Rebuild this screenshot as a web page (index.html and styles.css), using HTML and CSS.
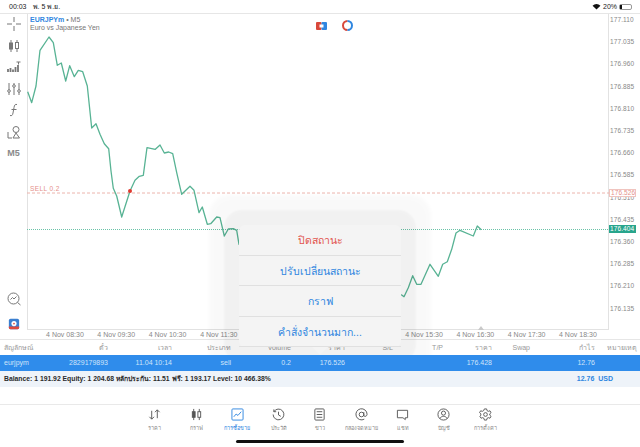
FILE: index.html
```html
<!DOCTYPE html>
<html lang="th">
<head>
  <meta charset="UTF-8">
  <meta name="viewport" content="width=device-width, initial-scale=1.0">
  <title>EURJPYm</title>
  <link rel="stylesheet" href="styles.css">
</head>
<body>
  <div class="status">
    <div><span class="clock">00:03</span><span class="date">พ. 5 พ.ย.</span></div>
    <div class="status-right">
      <svg width="9" height="7" viewBox="0 0 10 8"><path d="M5 7.5 .5 3a6.4 6.4 0 0 1 9 0z" fill="#111"/></svg>
      <span>20%</span>
      <span class="battery"><span class="battery-level"></span></span>
    </div>
  </div>

  <div class="main">
    <div class="tools">
      <svg class="tool" viewBox="0 0 14 14"><path d="M0 7h5M9 7h5M7 0v5M7 9v5"/></svg>
      <svg class="tool" viewBox="0 0 14 14"><path d="M4 1v12M10 1v12"/><rect x="2.5" y="4" width="3" height="6" fill="#777"/><rect x="8.5" y="3.500" width="3" height="6" fill="#fff"/></svg>
      <svg class="tool" viewBox="0 0 14 14"><path d="M1 12V9M3.500 12V8M6 12V9.500M8.500 12V7M11 12V5" stroke-width="1.8"/><path d="M9.500 2h4M11.500 2v2.500"/></svg>
      <svg class="tool" viewBox="0 0 14 14"><path d="M2 1v12M7 1v12M12 1v12"/><circle cx="2" cy="9" r="1.300" fill="#fff"/><circle cx="7" cy="4" r="1.300" fill="#fff"/><circle cx="12" cy="9" r="1.300" fill="#fff"/></svg>
      <svg class="tool" viewBox="0 0 14 14"><path d="M10 1.500C8 1 7.500 2 7 4.500L6 10c-.4 2.400-1.200 3-3 2.500M4.500 6.500h5"/></svg>
      <svg class="tool" viewBox="0 0 14 14"><circle cx="9" cy="4.500" r="3"/><path d="M1 7v6h4M9 8l3.500 5h-6.500z"/></svg>
      <div class="tool-text">M5</div>
      <div class="tools-gap"></div>
      <svg class="tool" viewBox="0 0 14 14"><circle cx="6.500" cy="6.500" r="5.500"/><path d="M3.500 7.500l2-2 1.500 1.500 2.500-2.500M10.500 10.500l3 2.500"/></svg>
      <svg class="tool tool-logo" viewBox="0 0 14 14"><rect x="1" y="1" width="12" height="12" rx="2" fill="#3b7fd0" stroke="none"/><path d="M1 10h12v1.500a1.500 1.500 0 0 1-1.500 1.500h-9A1.500 1.500 0 0 1 1 11.500z" fill="#e0493c" stroke="none"/><circle cx="7" cy="6.500" r="3" fill="#fff" stroke="none"/><circle cx="7" cy="6.500" r="1" fill="#e0493c" stroke="none"/></svg>
    </div>

    <div class="chart">
      <svg class="plot" viewBox="27 13 582 317">
        <line x1="27" y1="192" x2="609" y2="192" class="sell-line"/>
        <line x1="27" y1="228.500" x2="609" y2="228.500" class="price-line"/>
        <polyline class="series" points="27.700,90.700 31.700,101.700 36,85 40,49.300 49,36 53.300,41.700 57.300,64.300 61.300,62 65.700,80 69.700,64.700 74.300,75.700 78.300,69.300 82.700,70.700 87.300,85 91.700,127 96,122.700 100,133.300 104.300,142.700 108.700,147.700 111,170 113.300,187.300 116.700,195 121.700,216 130,190 135,179.300 139.300,175.300 143.300,174.300 147,146.700 155.300,148.300 160,144 164.300,152 168.700,151 172.700,152.700 176.700,171.700 181.700,193.300 190,185.300 194,189.300 199,211.700 202.300,206 207.300,223.300 210.700,222.700 216.700,216 220,216.700 224.300,235 228.300,228 233.300,227.700 236.700,229.300 239,243.300 260,262 320,290 380,285 401.700,294 404,295.700 408.300,286.700 412.700,274.700 416.700,283.300 421,283.300 430,263.300 438.300,275.300 442.700,263.300 447.300,260.700 451.700,248.300 456,232 460,229.300 473.300,235 477.300,225 481.300,228.700"/>
        <circle cx="130" cy="190" r="2" fill="#e0392f"/>
        <path d="M481 325l3 4h-6z" fill="#c9c9c9"/>
      </svg>
      <div class="chart-title"><b>EURJPYm</b> • M5</div>
      <div class="chart-sub">Euro vs Japanese Yen</div>
      <div class="sell-label">SELL 0.2</div>
      <div class="chart-badges">
        <svg width="11" height="8" viewBox="0 0 11 8"><rect width="5.500" height="8" rx="1" fill="#d9483b"/><rect x="5.500" width="5.500" height="8" rx="1" fill="#2f86e0"/><rect x="3.500" y="2.500" width="4" height="3" fill="#fff"/></svg>
        <svg width="11" height="11" viewBox="0 0 11 11" fill="none" stroke-width="2"><path d="M5.500 1a4.500 4.500 0 0 0 0 9" stroke="#d9483b"/><path d="M5.500 1a4.500 4.500 0 0 1 0 9" stroke="#2f86e0"/></svg>
      </div>
    </div>

    <div class="axis-y">
      <span>177.110</span><span>177.035</span><span>176.960</span><span>176.885</span>
      <span>176.810</span><span>176.735</span><span>176.660</span><span>176.585</span>
      <span>176.510</span><span>176.435</span><span>176.360</span><span>176.285</span>
      <span>176.210</span><span>176.135</span>
      <div class="tag tag-sell">176.526</div>
      <div class="tag tag-price">176.404</div>
    </div>
  </div>

  <div class="axis-x">
    <span>4 Nov 08:30</span><span>4 Nov 09:30</span><span>4 Nov 10:30</span><span>4 Nov 11:30</span>
    <div class="axis-gap"></div>
    <span>4 Nov 15:30</span><span>4 Nov 16:30</span><span>4 Nov 17:30</span><span>4 Nov 18:30</span>
  </div>

  <div class="row row-head">
    <span class="first">สัญลักษณ์</span><span>ตั๋ว</span><span>เวลา</span><span>ประเภท</span><span>Volume</span><span>ราคา</span><span>S/L</span><span>T/P</span><span>ราคา</span><span>Swap</span><span>กำไร</span><span>หมายเหตุ</span>
  </div>
  <div class="row row-active">
    <span class="first">eurjpym</span><span>2829179893</span><span>11.04 10:14</span><span>sell</span><span>0.2</span><span>176.526</span><span></span><span></span><span>176.428</span><span></span><span>12.76</span><span></span>
  </div>
  <div class="balance">
    <span>Balance: 1 191.92 Equity: 1 204.68 หลักประกัน: 11.51 ฟรี: 1 193.17 Level: 10 466.38%</span>
    <span class="balance-total">12.76&nbsp; USD</span>
  </div>

  <div class="nav">
    <div class="nav-item">
      <svg viewBox="0 0 14 14"><path d="M4 3v9M1.500 9.500 4 12l2.500-2.500M10 11V2M7.500 4.500 10 2l2.500 2.500"/></svg>
      <span>ราคา</span>
    </div>
    <div class="nav-item">
      <svg viewBox="0 0 14 14"><path d="M4 1v12M10 1v12"/><rect x="2.500" y="4" width="3" height="6" fill="#555"/><rect x="8.500" y="4" width="3" height="6" fill="#fff"/></svg>
      <span>กราฟ</span>
    </div>
    <div class="nav-item nav-active">
      <svg viewBox="0 0 14 14"><rect x="1" y="1" width="12" height="12" rx="1"/><path d="M3 9.500l2.500-3 2 1.500L11 4"/></svg>
      <span>การซื้อขาย</span>
    </div>
    <div class="nav-item">
      <svg viewBox="0 0 14 14"><path d="M2 4a5.800 5.800 0 1 1-.8 3M2 1.500V4h2.500M7 4v3.500l2.500 1.500"/></svg>
      <span>ประวัติ</span>
    </div>
    <div class="nav-item">
      <svg viewBox="0 0 14 14"><rect x="2" y="1" width="10" height="12" rx="1"/><path d="M4 4h6M4 7h6M4 10h6"/></svg>
      <span>ข่าว</span>
    </div>
    <div class="nav-item">
      <svg viewBox="0 0 14 14"><circle cx="7" cy="7" r="2.500"/><path d="M9.500 4.500v3.300c0 2 3.500 1.500 3.500-1A6 6 0 1 0 10 12"/></svg>
      <span>กล่องจดหมาย</span>
    </div>
    <div class="nav-item">
      <svg viewBox="0 0 14 14"><path d="M1.500 2.500h11v8H10v2l-2.500-2h-6z"/></svg>
      <span>แชท</span>
    </div>
    <div class="nav-item">
      <svg viewBox="0 0 14 14"><circle cx="7" cy="7" r="6"/><circle cx="7" cy="5.500" r="2.200"/><path d="M3 11.500c1-2 2.500-2.500 4-2.500s3 .5 4 2.500"/></svg>
      <span>บัญชี</span>
    </div>
    <div class="nav-item">
      <svg viewBox="0 0 14 14"><path d="M5.800 1h2.400l.4 1.800 1.400.8 1.800-.6 1.200 2-1.400 1.300v1.400l1.400 1.300-1.200 2-1.800-.6-1.400.8L8.200 13H5.800l-.4-1.800-1.400-.8-1.800.6-1.200-2L2 7.700V6.300L.6 5l1.200-2 1.800.6 1.400-.8z"/><circle cx="7" cy="7" r="2"/></svg>
      <span>การตั้งค่า</span>
    </div>
  </div>
  <div class="home-bar"></div>

  <div class="popover">
    <div class="popover-item danger">ปิดสถานะ</div>
    <div class="popover-item">ปรับเปลี่ยนสถานะ</div>
    <div class="popover-item">กราฟ</div>
    <div class="popover-item">คำสั่งจำนวนมาก...</div>
    <div class="popover-arrow"></div>
  </div>
</body>
</html>
```

FILE: styles.css
```css
* {
  box-sizing: border-box;
}

body {
  margin: 0;
  width: 640px;
  height: 447px;
  overflow: hidden;
  position: relative;
  background-color: #fff;
  font-family: "Liberation Sans", "Noto Sans", sans-serif;
  color: #777;
}

.status {
  height: 13px;
  display: flex;
  justify-content: space-between;
  align-items: center;
  padding: 0 8px 0 9px;
  font-size: 7px;
  color: #222;
}

.clock {
  margin-right: 6px;
}

.status-right {
  display: flex;
  align-items: center;
  gap: 2px;
}

.battery {
  width: 13px;
  height: 6px;
  border: 1px solid #999;
  border-radius: 2px;
  display: block;
}

.battery-level {
  display: block;
  width: 2px;
  height: 100%;
  background-color: #111;
}

.main {
  height: 317px;
  display: flex;
  border-top: 1px solid #e6e6e6;
}

.tools {
  width: 27px;
  flex: none;
  display: flex;
  flex-direction: column;
  align-items: center;
  padding-top: 3px;
}

.tool {
  width: 14px;
  height: 14px;
  margin-bottom: 7.500px;
  fill: none;
  stroke: #777;
  stroke-width: 1;
}

.tool-text {
  font-size: 9px;
  font-weight: bold;
  line-height: 14px;
  color: #8a8a8a;
}

.tools-gap {
  flex: 1;
}

.tool-logo {
  width: 12px;
  height: 12px;
  margin-top: 5px;
  margin-bottom: 0;
}

.chart {
  flex: 1;
  position: relative;
  border-left: 1px solid #e2e2e2;
  border-right: 1px solid #e2e2e2;
  border-bottom: 1px solid #e2e2e2;
  padding: 1px 0 0 2px;
}

.plot {
  position: absolute;
  left: -1px;
  top: 0;
  width: 582px;
  height: 317px;
}

.series {
  fill: none;
  stroke: #58b394;
  stroke-width: 1.300;
  stroke-linejoin: round;
}

.sell-line {
  stroke: #ecb4ac;
  stroke-width: 1;
  stroke-dasharray: 3 2;
}

.price-line {
  stroke: #6cc3a8;
  stroke-width: 1;
  stroke-dasharray: 1 1;
}

.chart-title {
  position: relative;
  font-size: 7px;
  line-height: 9px;
}

.chart-title b {
  color: #2f86e0;
}

.chart-sub {
  position: relative;
  font-size: 7px;
  line-height: 8px;
  color: #777;
}

.sell-label {
  position: absolute;
  left: 2px;
  top: 171px;
  font-size: 6.500px;
  letter-spacing: .4px;
  color: #e58f8a;
}

.chart-badges {
  position: absolute;
  left: 288px;
  top: 6px;
  display: flex;
  align-items: center;
  gap: 15px;
}

.axis-y {
  width: 31px;
  flex: none;
  position: relative;
  display: flex;
  flex-direction: column;
  padding-left: 1px;
  font-size: 6.500px;
  line-height: 22.200px;
  letter-spacing: .1px;
  color: #888;
}

.axis-y span:first-child {
  margin-top: -5px;
}

.tag {
  position: absolute;
  left: 0;
  width: 27px;
  height: 8px;
  line-height: 8px;
  padding-left: 1px;
  font-size: 6.500px;
}

.tag-sell {
  top: 175px;
  background-color: #fff;
  color: #e58f8a;
  border: 1px solid #f0c4bf;
  line-height: 6px;
}

.tag-price {
  top: 211px;
  background-color: #28a58c;
  color: #fff;
}

.axis-x {
  height: 9px;
  display: flex;
  padding-left: 39.300px;
  font-size: 7px;
  line-height: 9px;
  color: #888;
}

.axis-x span {
  width: 51.300px;
  flex: none;
  text-align: center;
  white-space: nowrap;
}

.axis-gap {
  width: 153.900px;
  flex: none;
}

.row {
  display: grid;
  grid-template-columns: 46px 58px 64px 59px 60px 54px 48px 50px 49px 38px 65px 42px;
  padding: 0 3px 0 4px;
  font-size: 7px;
  text-align: right;
  white-space: nowrap;
}

.row .first {
  text-align: left;
}

.row-head {
  height: 16px;
  line-height: 16px;
  border-top: 1px solid #e6e6e6;
  color: #999;
}

.row-active {
  position: relative;
  z-index: 1;
  height: 16px;
  line-height: 16px;
  background-color: #2f8ceb;
  color: #cfe4fa;
}

.balance {
  position: relative;
  z-index: 1;
  height: 16px;
  display: flex;
  justify-content: space-between;
  padding: 0 27px 0 4px;
  line-height: 16px;
  background-color: #eef3f9;
  color: #2b2b2b;
  font-size: 6.800px;
  font-weight: bold;
}

.balance-total {
  color: #2f86e0;
  font-size: 7px;
}

.nav {
  margin-top: 17px;
  height: 43px;
  display: flex;
  justify-content: center;
  padding-top: 3px;
  border-top: 1px solid #e9e9e9;
}

.nav-item {
  width: 41.300px;
  display: flex;
  flex-direction: column;
  align-items: center;
  font-size: 5.500px;
  line-height: 8px;
  white-space: nowrap;
  color: #888;
}

.nav-item svg {
  width: 13px;
  height: 13px;
  margin-bottom: 3px;
  fill: none;
  stroke: #555;
  stroke-width: 1;
}

.nav-active {
  color: #2f86e0;
}

.nav-active svg {
  stroke: #2f86e0;
}

.home-bar {
  position: absolute;
  left: 236px;
  top: 440px;
  width: 168px;
  height: 3px;
  border-radius: 2px;
  background-color: #111;
}

.popover {
  position: absolute;
  left: 239px;
  top: 225px;
  width: 162px;
  height: 122px;
  border-radius: 6px;
  background-color: #f4f4f4;
  box-shadow: 0 0 2px 15px rgba(0, 0, 0, .03), 0 0 4px 30px rgba(0, 0, 0, .025);
  font-size: 10.500px;
  font-weight: 500;
  color: #2f86e0;
}

.popover-item {
  height: 30.600px;
  line-height: 31px;
  text-align: center;
  border-bottom: 1px solid #e0e0e0;
}

.popover-item:last-of-type {
  border-bottom: none;
}

.danger {
  color: #e2534c;
}

.popover-arrow {
  position: absolute;
  left: 73px;
  bottom: -8px;
  border-left: 8px solid transparent;
  border-right: 8px solid transparent;
  border-top: 8px solid #f4f4f4;
}
```
